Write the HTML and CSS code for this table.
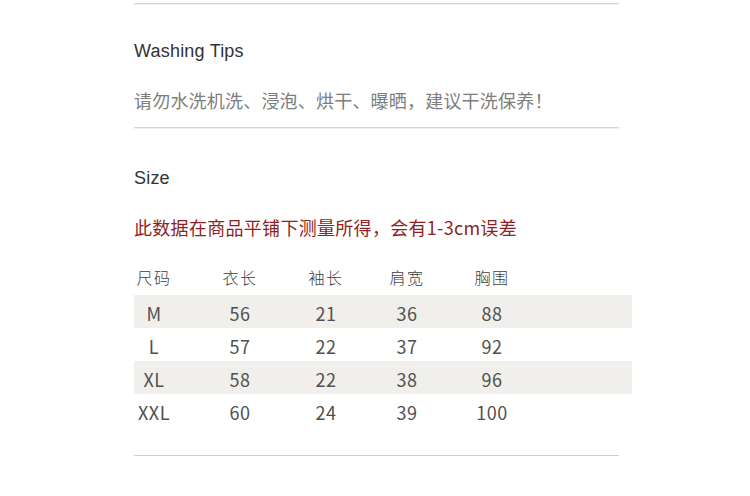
FILE: index.html
```html
<!DOCTYPE html>
<html lang="zh">
<head>
<meta charset="utf-8">
<title>Washing Tips &amp; Size</title>
<link rel="stylesheet" href="styles.css">
</head>
<body>
<div class="page">
  <div class="rule rule-top"></div>
  <h2 class="title title-wash">Washing Tips</h2>
  <p class="tip">请勿水洗机洗、浸泡、烘干、曝晒，建议干洗保养！</p>
  <div class="rule rule-mid"></div>
  <h2 class="title title-size">Size</h2>
  <p class="note">此数据在商品平铺下测量所得，会有1-3cm误差</p>
  <div class="table">
    <div class="row head">
      <span class="cell first">尺码</span><span class="cell">衣长</span><span class="cell">袖长</span><span class="cell">肩宽</span><span class="cell">胸围</span>
    </div>
    <div class="row shade">
      <span class="cell first">M</span><span class="cell">56</span><span class="cell">21</span><span class="cell">36</span><span class="cell">88</span>
    </div>
    <div class="row">
      <span class="cell first">L</span><span class="cell">57</span><span class="cell">22</span><span class="cell">37</span><span class="cell">92</span>
    </div>
    <div class="row shade">
      <span class="cell first">XL</span><span class="cell">58</span><span class="cell">22</span><span class="cell">38</span><span class="cell">96</span>
    </div>
    <div class="row">
      <span class="cell first">XXL</span><span class="cell">60</span><span class="cell">24</span><span class="cell">39</span><span class="cell">100</span>
    </div>
  </div>
  <div class="rule rule-bottom"></div>
</div>
</body>
</html>
```
FILE: styles.css
```css
html, body {
  margin: 0;
  padding: 0;
  background: #ffffff;
}

body {
  font-family: "Noto Sans CJK SC", "Noto Sans", sans-serif;
}

.page {
  margin-left: 134px;
  width: 485px;
  padding-top: 3px;
}

.rule {
  height: 1px;
  background: #d6d6d6;
  box-shadow: 0 1px 0 #efefef;
}

.title {
  margin: 0;
  font-family: "Liberation Sans", Arial, sans-serif;
  font-weight: normal;
  font-size: 18px;
  line-height: 24px;
  color: #333333;
  letter-spacing: 0.2px;
}

.title-wash {
  margin-top: 35px;
}

.tip {
  margin: 25px 0 0;
  font-size: 18px;
  line-height: 24px;
  color: #7d7d7d;
  white-space: nowrap;
  letter-spacing: 0.2px;
}

.rule-mid {
  margin-top: 15px;
}

.title-size {
  margin-top: 38px;
}

.note {
  margin: 25px 0 0;
  font-size: 18px;
  line-height: 24px;
  color: #8e1f22;
  white-space: nowrap;
  letter-spacing: 0.3px;
}

.table {
  margin-top: 22px;
  width: 498px;
}

.row {
  display: grid;
  grid-template-columns: 64px 84px 88px 74px 96px;
  align-items: center;
  height: 33px;
  box-sizing: border-box;
  padding-top: 2px;
  font-size: 18px;
  color: #505050;
  letter-spacing: 0.5px;
}

.row.head {
  height: 34px;
  padding-top: 0;
  padding-bottom: 2px;
  font-size: 16px;
  letter-spacing: 1.5px;
  color: #404040;
  font-weight: 300;
}

.row.shade {
  background: #f1efec;
}

.cell {
  text-align: center;
}

.cell.first {
  width: 40px;
  justify-self: start;
}

.rule-bottom {
  margin-top: 28px;
  background: #cfcfcf;
}
```
